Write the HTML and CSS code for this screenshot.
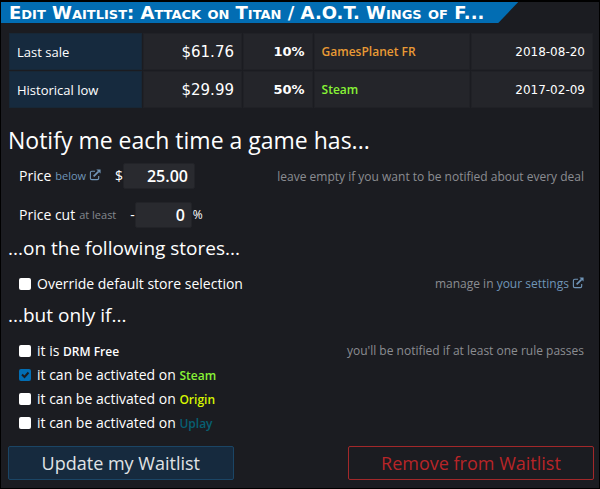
FILE: index.html
```html
<!DOCTYPE html>
<html lang="en">
<head>
<meta charset="utf-8">
<title>Edit Waitlist</title>
<link rel="stylesheet" href="styles.css">
</head>
<body>
<main class="dialog">
  <header class="title-bar"><h1 class="title">Edit Waitlist: Attack on Titan / A.O.T. Wings of F...</h1></header>
  <div class="content">
    <table class="prices">
      <colgroup><col class="col-label"><col class="col-price"><col class="col-cut"><col class="col-store"><col class="col-date"></colgroup>
      <tbody>
        <tr><th scope="row">Last sale</th><td class="price">$61.76</td><td class="cut">10%</td><td class="store gamesplanet">GamesPlanet FR</td><td class="date">2018-08-20</td></tr>
        <tr><th scope="row">Historical low</th><td class="price">$29.99</td><td class="cut">50%</td><td class="store steam">Steam</td><td class="date">2017-02-09</td></tr>
      </tbody>
    </table>
    <form class="form">
      <h2 class="heading-main">Notify me each time a game has...</h2>
      <div class="row row-field">
        <div class="field">
          <label for="price">Price</label>
          <a class="small link" href="#">below <svg class="ext" viewBox="0 0 13 13" aria-hidden="true"><path d="M6.5 2.5H3A1.5 1.5 0 0 0 1.5 4v6A1.5 1.5 0 0 0 3 11.5h6A1.5 1.5 0 0 0 10.5 10V7.5" fill="none" stroke="currentColor" stroke-width="1.2"/><path d="M5 8l5.5-5.5" fill="none" stroke="currentColor" stroke-width="1.8"/><path d="M8 .5h4.5V5z" fill="currentColor"/></svg></a>
          <span class="unit-before">$</span><input class="input input-price" id="price" type="text" value="25.00">
        </div>
        <p class="hint">leave empty if you want to be notified about every deal</p>
      </div>
      <div class="row row-field">
        <div class="field">
          <label for="cut">Price cut</label>
          <span class="small">at least</span>
          <span class="unit-before">-</span><input class="input input-cut" id="cut" type="text" value="0"><span class="unit-after">%</span>
        </div>
      </div>
      <h3 class="heading-sub">...on the following stores...</h3>
      <div class="row">
        <label class="check"><input type="checkbox"><span>Override default store selection</span></label>
        <p class="hint">manage in <a class="link" href="#">your settings <svg class="ext" viewBox="0 0 13 13" aria-hidden="true"><path d="M6.5 2.5H3A1.5 1.5 0 0 0 1.5 4v6A1.5 1.5 0 0 0 3 11.5h6A1.5 1.5 0 0 0 10.5 10V7.5" fill="none" stroke="currentColor" stroke-width="1.2"/><path d="M5 8l5.5-5.5" fill="none" stroke="currentColor" stroke-width="1.8"/><path d="M8 .5h4.5V5z" fill="currentColor"/></svg></a></p>
      </div>
      <h3 class="heading-sub">...but only if...</h3>
      <div class="row">
        <div class="rules">
          <label class="check"><input type="checkbox"><span>it is <b class="drm">DRM Free</b></span></label>
          <label class="check"><input type="checkbox" checked><span>it can be activated on <b class="drm steam">Steam</b></span></label>
          <label class="check"><input type="checkbox"><span>it can be activated on <b class="drm origin">Origin</b></span></label>
          <label class="check"><input type="checkbox"><span>it can be activated on <b class="drm uplay">Uplay</b></span></label>
        </div>
        <p class="hint">you'll be notified if at least one rule passes</p>
      </div>
      <div class="actions">
        <button class="btn btn-update" type="submit">Update my Waitlist</button>
        <button class="btn btn-remove" type="button">Remove from Waitlist</button>
      </div>
    </form>
  </div>
</main>
</body>
</html>
```
FILE: styles.css
```css
* { box-sizing: border-box; }
body { margin: 0; background: #1b1c21; color: #fff; font: 14px/24px "Open Sans", "Noto Sans", sans-serif; }
h1, h2, h3, p { margin: 0; font-weight: 400; }
.dialog { min-height: 100vh; border: 1px solid #000; border-top-width: 2px; }
.title-bar { width: 86.5%; background: #026db3; clip-path: polygon(0 0, 100% 0, calc(100% - 20px) 100%, 0 100%); padding-left: 8px; }
.title { font: bold 18px/21px "DejaVu Sans", sans-serif; font-variant: small-caps; white-space: nowrap; }
.content { padding: 9px 5px 7px 7px; }
.prices { width: 100%; table-layout: fixed; border-collapse: separate; border-spacing: 1px; }
.col-label { width: 23%; }
.col-price { width: 17%; }
.col-cut { width: 12%; }
.col-store { width: 27%; }
.prices th, .prices td { height: 37px; padding: 0 7px; background: #24252a; border: 1px solid #202126; font-size: 13px; line-height: 20px; text-align: right; }
.prices th { background: #162a3e; border-color: #172736; font-weight: 400; text-align: left; }
.prices .price { font: 15px/20px "DejaVu Sans", sans-serif; }
.prices .cut { font: bold 13px/20px "DejaVu Sans", sans-serif; }
.prices .store { text-align: left; font-size: 12px; font-weight: 600; }
.prices .date { font: 12px/20px "DejaVu Sans", sans-serif; }
.gamesplanet { color: #e99a35; }
.steam { color: #88f336; }
.origin { color: #d6f500; }
.uplay { color: #076073; }
.heading-main { margin-top: 15px; font-size: 23px; line-height: 32px; }
.heading-sub { font-size: 19px; line-height: 28px; }
.row { display: flex; justify-content: space-between; padding: 10px 10px 5px 11px; }
.row-field { padding: 7px 10px 6px 11px; }
.field { display: flex; align-items: center; }
.row-field .hint { align-self: flex-end; }
.small { margin-left: 4px; font-size: 11px; color: #85888e; }
.link { color: #7095b8; text-decoration: none; }
.ext { width: 12px; height: 12px; vertical-align: -1px; }
.unit-before { margin-left: 14px; }
.unit-after { font-size: 12px; margin-left: 1px; }
.input { height: 26px; border: 1px solid #222328; border-radius: 2px; background: #292a2f; color: #fff; padding: 0 6px; font: 600 16px/24px "Open Sans", sans-serif; text-align: right; }
.input-price { width: 72px; }
.input-cut { width: 57px; }
.hint { font-size: 12px; color: #8b8d92; }
.check { display: flex; align-items: center; gap: 6px; }
.check input { appearance: none; width: 12px; height: 12px; margin: 0; border-radius: 2px; background: #fff; }
.check input:checked { background: #026db3 url("data:image/svg+xml,%3Csvg xmlns='http://www.w3.org/2000/svg' viewBox='0 0 12 12'%3E%3Cpath d='M3 5.5l2.5 2.5 4-4.5' fill='none' stroke='%231b1c21' stroke-width='2'/%3E%3C/svg%3E"); }
.drm { font-size: 12px; line-height: 16px; font-weight: 600; }
.actions { display: flex; justify-content: space-between; margin-top: 6px; }
.btn { height: 34px; border-radius: 2px; font: 18px/24px "Open Sans", sans-serif; cursor: pointer; }
.btn-update { width: 38.5%; background: #162a3e; border: 1px solid #1b4565; color: #e0e3e6; }
.btn-remove { width: 42%; background: none; border: 1px solid #a3282a; color: #b82528; }
```
